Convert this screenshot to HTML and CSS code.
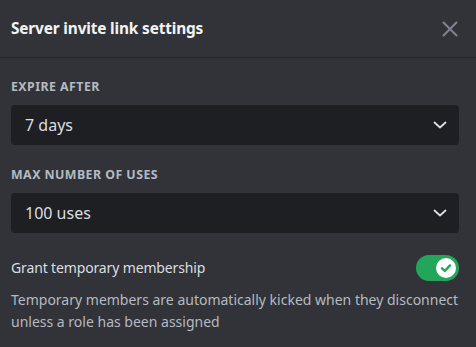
FILE: index.html
```html
<!DOCTYPE html>
<html lang="en">
<head>
<meta charset="utf-8">
<title>Server invite link settings</title>
<link rel="stylesheet" href="styles.css">
</head>
<body>
<div class="modal">
  <div class="header">
    <h1 class="title">Server invite link settings</h1>
    <button class="close" aria-label="Close">
      <svg width="16" height="16" viewBox="0 0 16 16"><path d="M1.5 1.5 L14.5 14.5 M14.5 1.5 L1.5 14.5" stroke="#80848e" stroke-width="2" stroke-linecap="round" fill="none"/></svg>
    </button>
  </div>
  <div class="body">
    <div class="field">
      <div class="label">Expire After</div>
      <div class="select">
        <span class="value">7 days</span>
        <svg class="chev" width="14" height="8" viewBox="0 0 14 8"><path d="M1.5 1.5 L7 6.5 L12.5 1.5" stroke="#dbdee1" stroke-width="1.8" fill="none" stroke-linecap="round" stroke-linejoin="round"/></svg>
      </div>
    </div>
    <div class="field">
      <div class="label">Max Number of Uses</div>
      <div class="select">
        <span class="value">100 uses</span>
        <svg class="chev" width="14" height="8" viewBox="0 0 14 8"><path d="M1.5 1.5 L7 6.5 L12.5 1.5" stroke="#dbdee1" stroke-width="1.8" fill="none" stroke-linecap="round" stroke-linejoin="round"/></svg>
      </div>
    </div>
    <div class="toggle-row">
      <span class="toggle-label">Grant temporary membership</span>
      <div class="switch">
        <div class="knob">
          <svg width="20" height="20" viewBox="0 0 20 20"><path d="M6 10.3 L8.8 13 L14 7.4" stroke="#23a55a" stroke-width="2.4" fill="none" stroke-linecap="round" stroke-linejoin="round"/></svg>
        </div>
      </div>
    </div>
    <p class="desc">Temporary members are automatically kicked when they disconnect unless a role has been assigned</p>
  </div>
</div>
</body>
</html>
```
FILE: styles.css
```css
* { box-sizing: border-box; }
html, body {
  margin: 0;
  padding: 0;
  background: #313338;
}
body {
  font-family: "Noto Sans", "Open Sans", sans-serif;
  color: #dbdee1;
}
.modal {
  width: 476px;
  height: 347px;
  background: #313338;
  overflow: hidden;
}
.header {
  height: 58px;
  display: flex;
  align-items: center;
  justify-content: space-between;
  padding: 0 18px 0 11px;
  border-bottom: 1px solid #26272b;
}
.title {
  margin: 0;
  font-size: 15.4px;
  line-height: 20px;
  font-weight: 700;
  letter-spacing: -0.01em;
  color: #f2f3f5;
}
.close {
  background: none;
  border: 0;
  padding: 0;
  width: 16px;
  height: 16px;
  display: flex;
}
.body {
  padding: 21px 17px 0 11px;
}
.field {
  margin-bottom: 22px;
}
.label {
  font-size: 12.4px;
  line-height: 16px;
  font-weight: 700;
  text-transform: uppercase;
  letter-spacing: 0.035em;
  color: #b5bac1;
  margin-bottom: 10px;
}
.select {
  height: 40px;
  background: #1e1f22;
  border-radius: 4px;
  display: flex;
  align-items: center;
  justify-content: space-between;
  padding: 0 12px 0 14px;
}
.value {
  font-size: 16px;
  line-height: 20px;
  color: #dbdee1;
}
.chev { display: block; }
.toggle-row {
  display: flex;
  align-items: center;
  justify-content: space-between;
  height: 26px;
}
.toggle-label {
  font-size: 14px;
  line-height: 20px;
  letter-spacing: -0.01em;
  color: #dbdee1;
}
.switch {
  width: 43px;
  height: 26px;
  border-radius: 13px;
  background: #23a55a;
  display: flex;
  align-items: center;
  justify-content: flex-end;
  padding-right: 3px;
}
.knob {
  width: 20px;
  height: 20px;
  border-radius: 50%;
  background: #ffffff;
}
.knob svg { display: block; }
.desc {
  margin: 8px 0 0;
  font-size: 14px;
  line-height: 22px;
  color: #b5bac1;
}
```
